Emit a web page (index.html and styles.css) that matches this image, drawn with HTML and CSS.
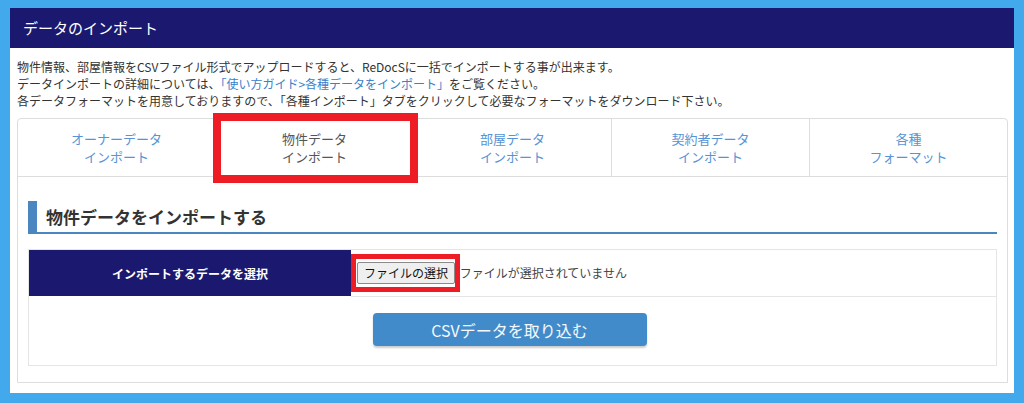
FILE: index.html
```html
<!DOCTYPE html>
<html lang="ja">
<head>
    <meta charset="UTF-8">
    <meta name="viewport" content="width=device-width, initial-scale=1.0">
    <title>データのインポート</title>
    <link rel="stylesheet" href="styles.css">
</head>
<body>
    <div id="panel">
        <div class="panel-heading">データのインポート</div>

        <div class="intro">
            <p>物件情報、部屋情報をCSVファイル形式でアップロードすると、ReDocSに一括でインポートする事が出来ます。</p>
            <p>データインポートの詳細については、<a href="#">「使い方ガイド&gt;各種データをインポート」</a>をご覧ください。</p>
            <p>各データフォーマットを用意しておりますので、「各種インポート」タブをクリックして必要なフォーマットをダウンロード下さい。</p>
        </div>

        <div class="tab-box">
            <ul class="tabs">
                <li><a href="#">オーナーデータ<br>インポート</a></li>
                <li class="active"><a href="#">物件データ<br>インポート</a><span class="mark mark-tab"></span></li>
                <li><a href="#">部屋データ<br>インポート</a></li>
                <li><a href="#">契約者データ<br>インポート</a></li>
                <li><a href="#">各種<br>フォーマット</a></li>
            </ul>

            <div class="tab-content">
                <h3 class="section-title">物件データをインポートする</h3>

                <table class="import-table">
                    <tr class="row-file">
                        <th>インポートするデータを選択</th>
                        <td>
                            <span class="file-wrap">
                                <button type="button" class="file-btn">ファイルの選択</button>
                                <span class="mark mark-file"></span>
                            </span>
                            <span class="file-name">ファイルが選択されていません</span>
                        </td>
                    </tr>
                    <tr class="row-submit">
                        <td colspan="2">
                            <button type="button" class="btn-primary">CSVデータを取り込む</button>
                        </td>
                    </tr>
                </table>
            </div>
        </div>
    </div>
</body>
</html>
```

FILE: styles.css
```css
body {
    font-family: "Noto Sans CJK JP", "Noto Sans", sans-serif;
    background-color: #42a9ec;
    margin: 0;
    padding: 8px 10px 10px;
    color: #333;
}
#panel {
    background: #fff;
    height: 385px;
}
.panel-heading {
    background-color: #1b196f;
    color: #fff;
    font-size: 15px;
    height: 40px;
    line-height: 40px;
    padding-left: 13px;
}
.intro {
    padding: 10px 7px 0;
    font-size: 12px;
    line-height: 17px;
}
.intro p {
    margin: 0;
}
.intro a {
    color: #3a80cc;
    text-decoration: none;
}
.tab-box {
    margin: 9px 6px 0 7px;
    border: 1px solid #ddd;
    border-radius: 4px 4px 0 0;
    height: 263px;
}
.tabs {
    list-style: none;
    margin: 0;
    padding: 0;
    display: flex;
    height: 57px;
    border-bottom: 1px solid #ddd;
}
.tabs li {
    flex: 1;
    position: relative;
    border-right: 1px solid #ddd;
    display: flex;
    align-items: center;
    justify-content: center;
}
.tabs li:last-child {
    border-right: none;
}
.tabs a {
    color: #5694d6;
    font-size: 13px;
    line-height: 18px;
    text-align: center;
    text-decoration: none;
}
.tabs li.active a {
    color: #555;
}

/* red annotation frames */
.mark {
    position: absolute;
    border: 8px solid #ee1c25;
    pointer-events: none;
}
.mark-tab {
    left: -3px;
    right: -5px;
    top: -6px;
    bottom: -7px;
}
.mark-file {
    left: -6px;
    right: -5px;
    top: -8px;
    bottom: -8px;
    border-width: 5px;
}

.tab-content {
    padding: 24px 10px 0;
}
.section-title {
    margin: 0;
    height: 31px;
    line-height: 31px;
    border-left: 9px solid #4a86c0;
    border-bottom: 2px solid #4a86c0;
    padding-left: 9px;
    font-size: 17px;
    font-weight: bold;
    color: #333;
}
.import-table {
    margin-top: 15px;
    width: 100%;
    border-collapse: collapse;
    border: 1px solid #e5e5e5;
}
.import-table th {
    width: 322px;
    height: 46px;
    padding: 0;
    background-color: #1b196f;
    color: #fff;
    font-size: 12px;
    font-weight: bold;
}
.import-table td {
    padding: 0 0 0 6px;
    font-size: 12px;
    color: #444;
}
.row-file td {
    border-bottom: 1px solid #e5e5e5;
}
.file-wrap {
    position: relative;
    display: inline-block;
    vertical-align: middle;
}
.file-btn {
    font-family: inherit;
    font-size: 12px;
    color: #111;
    background: #efefef;
    border: 1px solid #8a8a8a;
    border-radius: 2px;
    height: 22px;
    padding: 0 6px;
    display: block;
}
.file-name {
    vertical-align: middle;
    margin-left: 2px;
}
.row-submit td {
    height: 66px;
    text-align: center;
    padding: 0 6px 2px 0;
}
.btn-primary {
    font-family: inherit;
    width: 274px;
    height: 33px;
    background-color: #428bca;
    color: #f4f8fc;
    font-size: 16px;
    border: none;
    border-radius: 4px;
    box-shadow: 0 2px 2px rgba(0, 0, 0, 0.2);
    cursor: pointer;
}
```
